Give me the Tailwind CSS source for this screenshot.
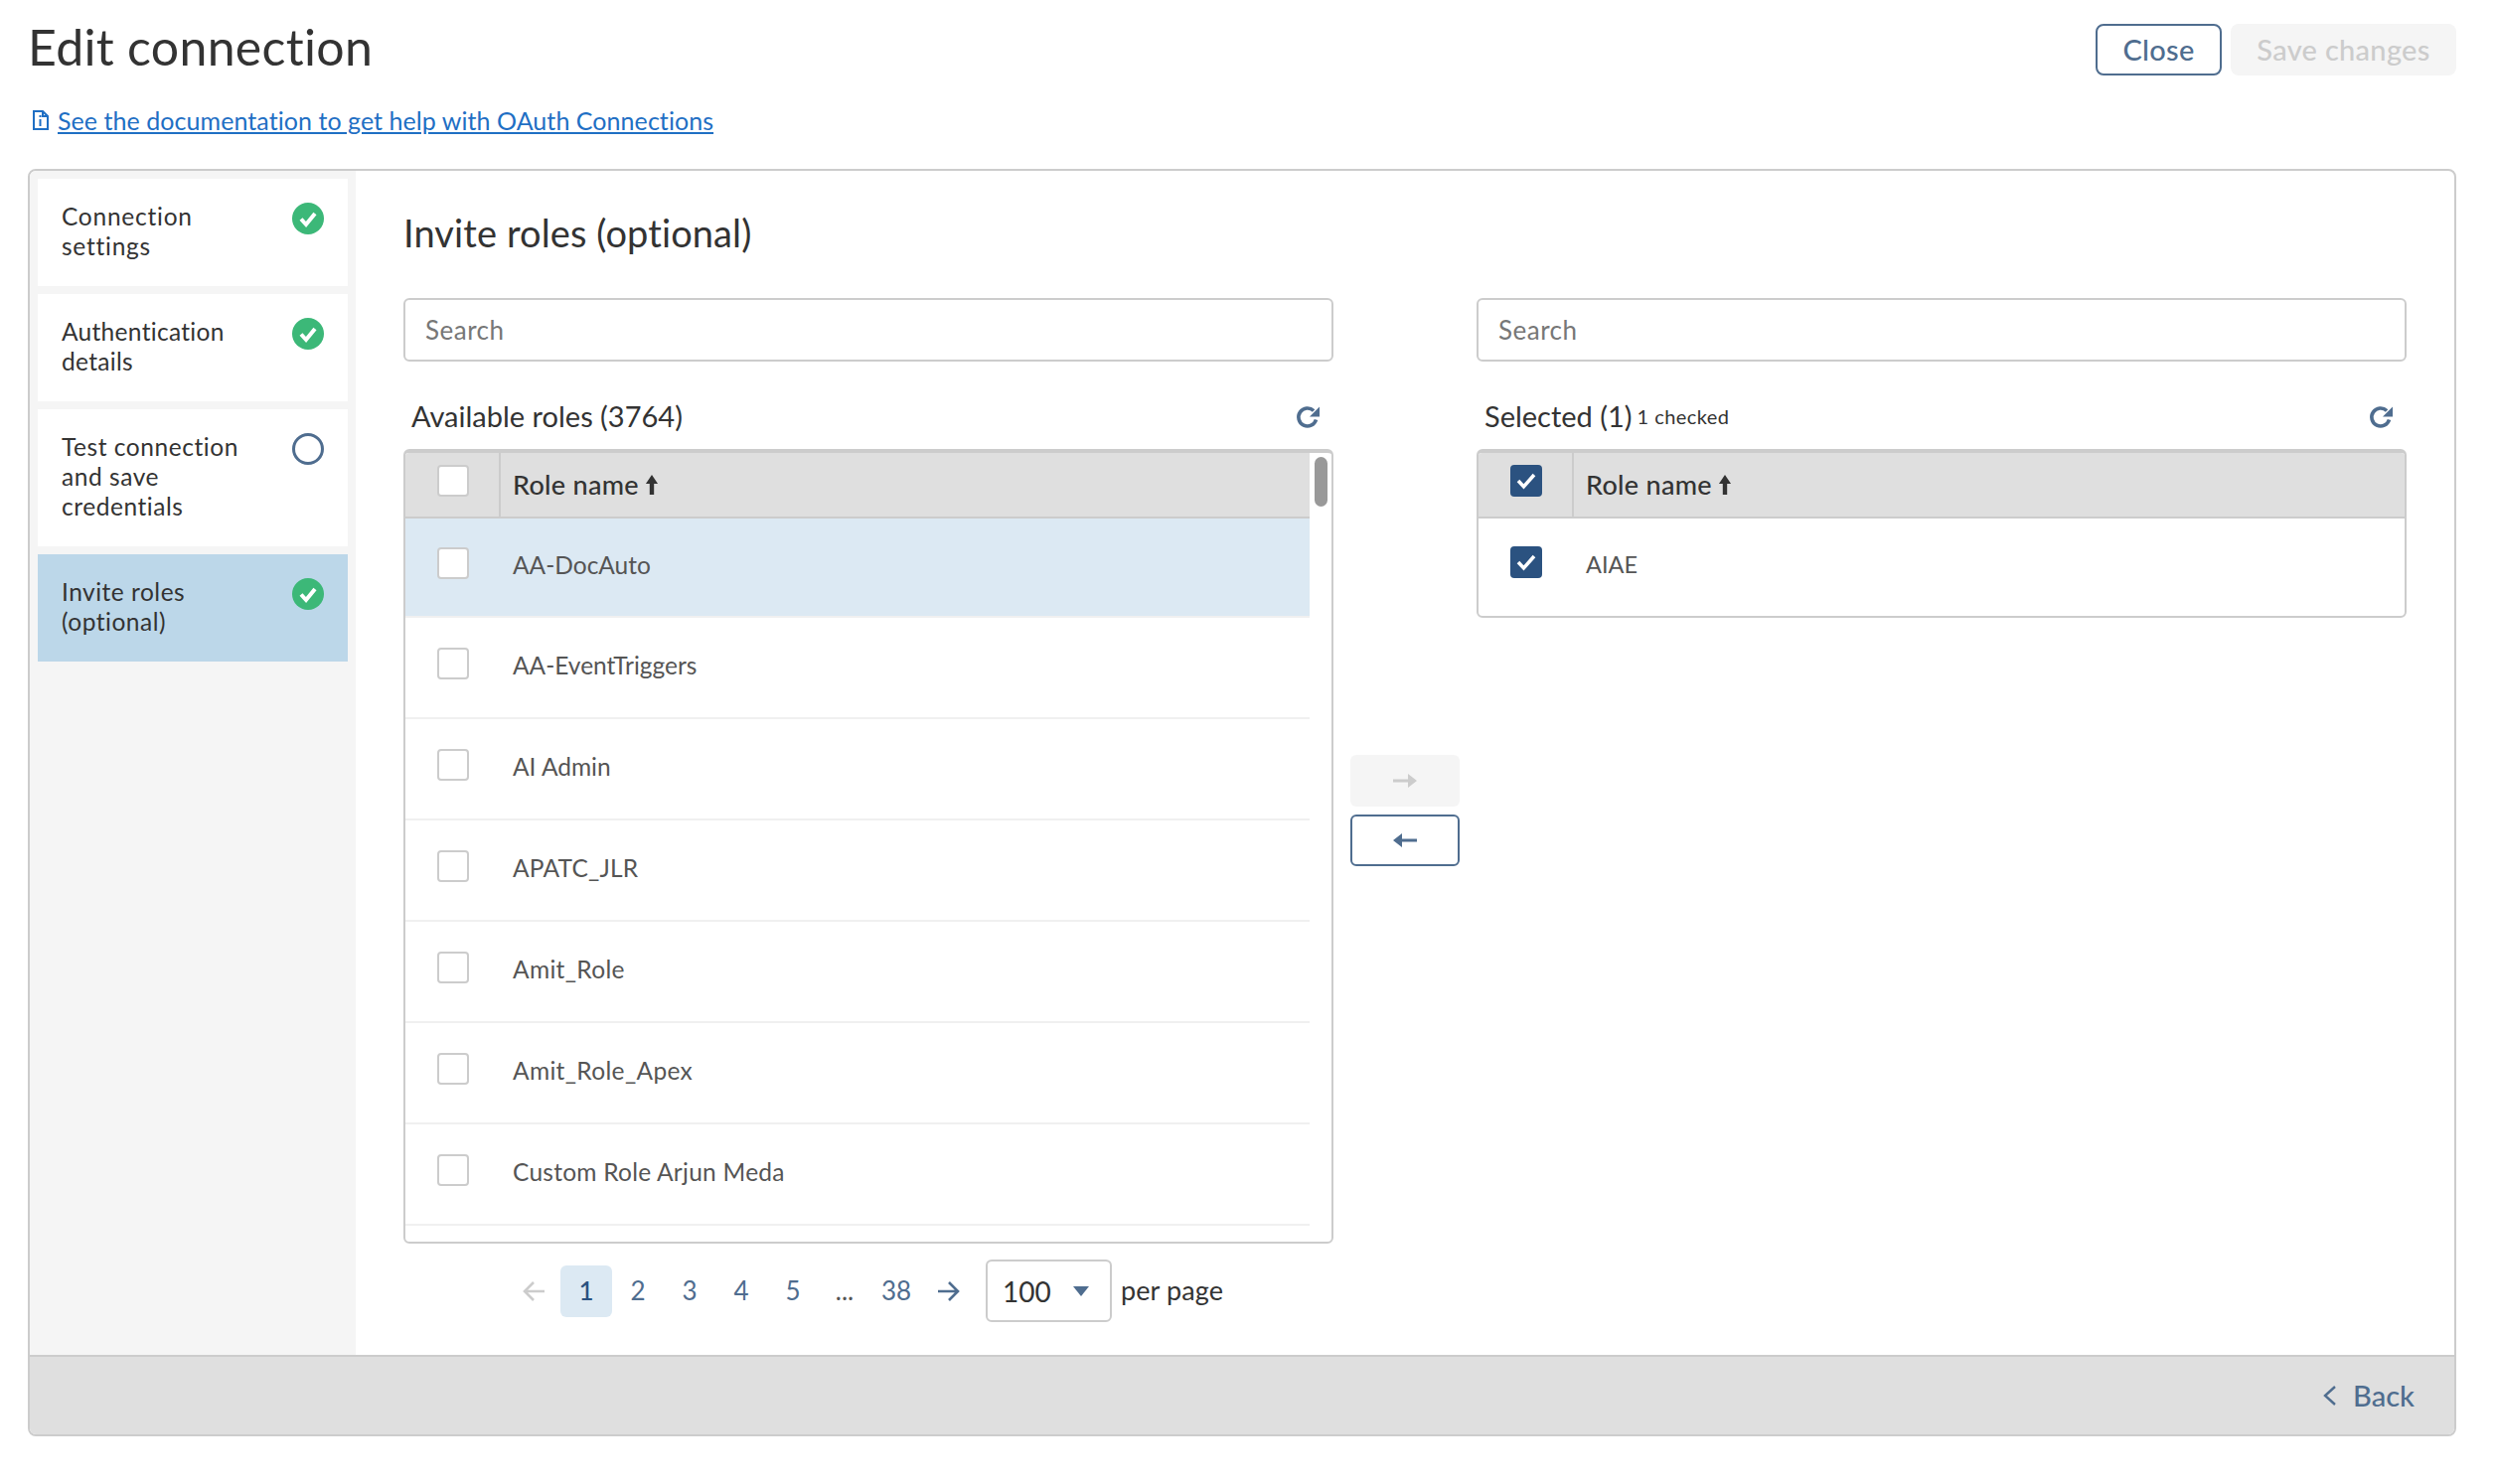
<!DOCTYPE html>
<html>
<head>
<meta charset="utf-8">
<script src="https://cdn.jsdelivr.net/npm/@tailwindcss/browser@4"></script>
<title>Edit connection</title>
</head>
<body class="bg-white font-['Lato',sans-serif] text-[#333]">
<div class="ml-[28px] w-[2444px]">
  <div class="flex justify-between pt-[24px]">
    <h1 class="text-[50px] leading-[50px] -mt-[2px] font-normal tracking-[0.3px] text-[#333]">Edit connection</h1>
    <div class="flex gap-[9px]">
      <button class="w-[127px] h-[52px] rounded-[8px] border-2 border-[#4f6d8f] text-[#4f6d8f] text-[29px] tracking-[0.3px] font-medium">Close</button>
      <button class="w-[227px] h-[52px] rounded-[8px] bg-[#f5f5f5] text-[#ccc] text-[29px] tracking-[0.3px] font-medium">Save changes</button>
    </div>
  </div>
  <div class="flex items-center h-[34px] mt-[28px] pl-[4px]">
    <svg class="w-[18px] h-[20px] mr-[8px]" viewBox="0 0 18 20" fill="none" stroke="#1f6fc4" stroke-width="2"><path d="M2 1h9l5 5v13H2z"/><path d="M11 1v5h5"/><path d="M8.500 9v7M8.500 5v2"/></svg>
    <a class="text-[25px] leading-[34px] text-[#1f6fc4] underline tracking-[0.06px]">See the documentation to get help with OAuth Connections</a>
  </div>
  <div class="mt-[32px] h-[1276px] border-2 border-[#ccc] rounded-[8px] overflow-hidden flex flex-col">
    <div class="flex flex-1 min-h-0">
      <div class="w-[328px] bg-[#f5f5f5] px-[8px] pt-[8px] flex flex-col gap-[8px]">
        <div class="bg-white h-[108px] pl-[24px] pr-[24px] pt-[23px] flex justify-between text-[24.5px] leading-[30px] tracking-[0.75px]">
          <span>Connection<br>settings</span>
          <svg class="w-[32px] h-[32px] mt-[1px]" viewBox="0 0 32 32"><circle cx="16" cy="16" r="16" fill="#3cb878"/><path d="M9 16.500l5 5.500 9-11" fill="none" stroke="#fff" stroke-width="4"/></svg>
        </div>
        <div class="bg-white h-[108px] pl-[24px] pr-[24px] pt-[23px] flex justify-between text-[24.5px] leading-[30px] tracking-[0.3px]">
          <span>Authentication<br>details</span>
          <svg class="w-[32px] h-[32px] mt-[1px]" viewBox="0 0 32 32"><circle cx="16" cy="16" r="16" fill="#3cb878"/><path d="M9 16.500l5 5.500 9-11" fill="none" stroke="#fff" stroke-width="4"/></svg>
        </div>
        <div class="bg-white h-[138px] pl-[24px] pr-[24px] pt-[23px] flex justify-between text-[24.5px] leading-[30px] tracking-[0.55px]">
          <span>Test connection<br>and save<br>credentials</span>
          <svg class="w-[32px] h-[32px] mt-[1px]" viewBox="0 0 32 32"><circle cx="16" cy="16" r="14.500" fill="#fff" stroke="#4f6d8f" stroke-width="3"/></svg>
        </div>
        <div class="bg-[#bcd7e9] h-[108px] pl-[24px] pr-[24px] pt-[23px] flex justify-between text-[24.5px] leading-[30px] tracking-[0.5px]">
          <span>Invite roles<br>(optional)</span>
          <svg class="w-[32px] h-[32px] mt-[1px]" viewBox="0 0 32 32"><circle cx="16" cy="16" r="16" fill="#3cb878"/><path d="M9 16.500l5 5.500 9-11" fill="none" stroke="#fff" stroke-width="4"/></svg>
        </div>
      </div>
      <div class="flex-1 pl-[48px] pr-[48px]">
        <h2 class="h-[128px] pt-[38px] text-[38px] leading-[48px] font-normal tracking-[0.1px]">Invite roles (optional)</h2>
        <div class="flex">
          <div class="w-[936px]">
            <input class="block w-full h-[64px] border-2 border-[#ccc] rounded-[6px] px-[20px] text-[26px] tracking-[0.5px] placeholder:text-[#777] outline-none" placeholder="Search">
            <div class="flex items-center justify-between h-[40px] mt-[36px] mb-[12px] pl-[8px] pr-[13px]">
              <span class="text-[29px] -mt-[2px]">Available roles (3764)</span>
              <svg class="w-[25px] h-[24px]" viewBox="0 0 25 24" fill="none"><path d="M20.500 14.500a9 9 0 1 1-2.400-9" stroke="#4f6d8f" stroke-width="3.600"/><path d="M24 1.500v10H14z" fill="#4f6d8f"/></svg>
            </div>
            <div class="relative h-[800px] border-x-2 border-b-2 border-t-4 border-[#ccc] rounded-[6px] overflow-hidden">
              <div class="w-[910px]">
                <div class="flex h-[66px] bg-[#dfdfdf] border-b-2 border-[#ccc]">
                  <div class="w-[96px] border-r-2 border-[#ccc] pl-[32px] pt-[12px]"><span class="block w-[32px] h-[32px] bg-white border-2 border-[#ccc] rounded-[4px]"></span></div>
                  <div class="flex items-center pl-[12px] text-[27px] tracking-[0.3px] font-medium text-[#333]">Role name<svg class="w-[14px] h-[22px] ml-[6px]" viewBox="0 0 12 20" fill="#333"><path d="M6 1l5.500 8H8v10H4V9H.5z"/></svg></div>
                </div>
                <div class="flex h-[100px] bg-[#dce9f3] border-b-2 border-[#f0f0f0] pt-[29px]">
                  <div class="w-[96px] pl-[32px]"><span class="block w-[32px] h-[32px] bg-white border-2 border-[#ccc] rounded-[4px]"></span></div>
                  <div class="pl-[12px] text-[24.5px] leading-[36px] text-[#555]">AA-DocAuto</div>
                </div>
                <div class="flex h-[102px] border-b-2 border-[#f0f0f0] pt-[30px]">
                  <div class="w-[96px] pl-[32px]"><span class="block w-[32px] h-[32px] bg-white border-2 border-[#ccc] rounded-[4px]"></span></div>
                  <div class="pl-[12px] text-[24.5px] leading-[36px] text-[#555]">AA-EventTriggers</div>
                </div>
                <div class="flex h-[102px] border-b-2 border-[#f0f0f0] pt-[30px]">
                  <div class="w-[96px] pl-[32px]"><span class="block w-[32px] h-[32px] bg-white border-2 border-[#ccc] rounded-[4px]"></span></div>
                  <div class="pl-[12px] text-[24.5px] leading-[36px] text-[#555]">AI Admin</div>
                </div>
                <div class="flex h-[102px] border-b-2 border-[#f0f0f0] pt-[30px]">
                  <div class="w-[96px] pl-[32px]"><span class="block w-[32px] h-[32px] bg-white border-2 border-[#ccc] rounded-[4px]"></span></div>
                  <div class="pl-[12px] text-[24.5px] tracking-[0.2px] leading-[36px] text-[#555]">APATC_JLR</div>
                </div>
                <div class="flex h-[102px] border-b-2 border-[#f0f0f0] pt-[30px]">
                  <div class="w-[96px] pl-[32px]"><span class="block w-[32px] h-[32px] bg-white border-2 border-[#ccc] rounded-[4px]"></span></div>
                  <div class="pl-[12px] text-[24.5px] tracking-[0.35px] leading-[36px] text-[#555]">Amit_Role</div>
                </div>
                <div class="flex h-[102px] border-b-2 border-[#f0f0f0] pt-[30px]">
                  <div class="w-[96px] pl-[32px]"><span class="block w-[32px] h-[32px] bg-white border-2 border-[#ccc] rounded-[4px]"></span></div>
                  <div class="pl-[12px] text-[24.5px] tracking-[0.35px] leading-[36px] text-[#555]">Amit_Role_Apex</div>
                </div>
                <div class="flex h-[102px] border-b-2 border-[#f0f0f0] pt-[30px]">
                  <div class="w-[96px] pl-[32px]"><span class="block w-[32px] h-[32px] bg-white border-2 border-[#ccc] rounded-[4px]"></span></div>
                  <div class="pl-[12px] text-[24.5px] tracking-[0.25px] leading-[36px] text-[#555]">Custom Role Arjun Meda</div>
                </div>
              </div>
              <div class="absolute top-[4px] right-[4px] w-[13px] h-[50px] rounded-full bg-[#999]"></div>
            </div>
            <div class="flex items-center h-[63px] mt-[16px] pl-[106px] text-[26px] text-[#4f6d8f]">
              <span class="w-[52px] flex justify-center"><svg class="w-[24px] h-[24px]" viewBox="0 0 24 24" fill="none" stroke="#ccc" stroke-width="2.600"><path d="M22 12H3M11 3l-9 9 9 9"/></svg></span>
              <span class="w-[52px] h-[52px] rounded-[6px] bg-[#dce9f3] text-[#2b5280] flex items-center justify-center font-medium">1</span>
              <span class="w-[52px] text-center">2</span>
              <span class="w-[52px] text-center">3</span>
              <span class="w-[52px] text-center">4</span>
              <span class="w-[52px] text-center">5</span>
              <span class="w-[52px] text-center text-[#555]">...</span>
              <span class="w-[52px] text-center">38</span>
              <span class="w-[52px] flex justify-center"><svg class="w-[24px] h-[24px]" viewBox="0 0 24 24" fill="none" stroke="#4f6d8f" stroke-width="2.600"><path d="M2 12h19M13 3l9 9-9 9"/></svg></span>
              <div class="ml-[12px] w-[127px] h-[63px] border-2 border-[#ccc] rounded-[6px] flex items-center justify-between pl-[15px] pr-[21px] text-[28px] text-[#333]">100<svg class="w-[16px] h-[10px]" viewBox="0 0 16 10" fill="#4f6d8f"><path d="M0 0h16L8 10z"/></svg></div>
              <span class="ml-[9px] text-[#333] text-[27px] tracking-[0.1px]">per page</span>
            </div>
          </div>
          <div class="w-[144px] pl-[17px] pt-[460px] flex flex-col gap-[8px]">
            <button class="w-[110px] h-[52px] rounded-[6px] bg-[#f5f5f5] flex items-center justify-center"><svg class="w-[24px] h-[16px]" viewBox="0 0 24 16" fill="#ccc"><path d="M0 6.500h15V1l9 7-9 7V9.500H0z"/></svg></button>
            <button class="w-[110px] h-[52px] rounded-[6px] border-2 border-[#4f6d8f] flex items-center justify-center"><svg class="w-[24px] h-[16px]" viewBox="0 0 24 16" fill="#4f6d8f"><path d="M24 6.500H9V1L0 8l9 7V9.500h15z"/></svg></button>
          </div>
          <div class="w-[936px]">
            <input class="block w-full h-[64px] border-2 border-[#ccc] rounded-[6px] px-[20px] text-[26px] tracking-[0.5px] placeholder:text-[#777] outline-none" placeholder="Search">
            <div class="flex items-center justify-between h-[40px] mt-[36px] mb-[12px] pl-[8px] pr-[13px]">
              <span class="flex items-center gap-[5px] -mt-[2px]"><span class="text-[29px]">Selected (1)</span><span class="text-[20px] tracking-[0.45px]">1 checked</span></span>
              <svg class="w-[25px] h-[24px]" viewBox="0 0 25 24" fill="none"><path d="M20.500 14.500a9 9 0 1 1-2.400-9" stroke="#4f6d8f" stroke-width="3.600"/><path d="M24 1.500v10H14z" fill="#4f6d8f"/></svg>
            </div>
            <div class="h-[170px] border-x-2 border-b-2 border-t-4 border-[#ccc] rounded-[6px] overflow-hidden">
              <div class="flex h-[66px] bg-[#dfdfdf] border-b-2 border-[#ccc]">
                <div class="w-[96px] border-r-2 border-[#ccc] pl-[32px] pt-[12px]"><span class="flex items-center justify-center w-[32px] h-[32px] bg-[#2b5280] rounded-[4px]"><svg class="w-[22px] h-[18px]" viewBox="0 0 22 18" fill="none" stroke="#fff" stroke-width="3.500"><path d="M3 9l5.500 6L19 3"/></svg></span></div>
                <div class="flex items-center pl-[12px] text-[27px] tracking-[0.3px] font-medium text-[#333]">Role name<svg class="w-[14px] h-[22px] ml-[6px]" viewBox="0 0 12 20" fill="#333"><path d="M6 1l5.500 8H8v10H4V9H.5z"/></svg></div>
              </div>
              <div class="flex pt-[28px]">
                <div class="w-[96px] pl-[32px]"><span class="flex items-center justify-center w-[32px] h-[32px] bg-[#2b5280] rounded-[4px]"><svg class="w-[22px] h-[18px]" viewBox="0 0 22 18" fill="none" stroke="#fff" stroke-width="3.500"><path d="M3 9l5.500 6L19 3"/></svg></span></div>
                <div class="pl-[12px] text-[23.5px] leading-[36px] text-[#555]">AIAE</div>
              </div>
            </div>
          </div>
        </div>
      </div>
    </div>
    <div class="h-[80px] shrink-0 bg-[#dfdfdf] border-t-2 border-[#ccc] flex items-center justify-end pr-[40px] text-[29px] font-medium text-[#4f6d8f]">
      <svg class="w-[14px] h-[20px] mr-[16px]" viewBox="0 0 14 20" fill="none" stroke="#4f6d8f" stroke-width="2.400"><path d="M12 1L2 10l10 9"/></svg>Back
    </div>
  </div>
</div>
</body>
</html>
